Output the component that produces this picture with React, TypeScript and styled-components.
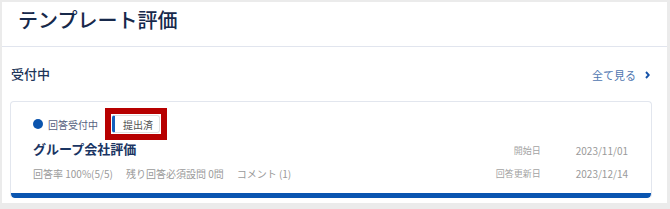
import { Fragment } from "react";
import styled, { createGlobalStyle } from "styled-components";

const GlobalStyle = createGlobalStyle`
  body {
    margin: 0;
    background: #ebebeb;
    font-family: "Noto Sans CJK JP", "Noto Sans", sans-serif;
  }
`;

const Panel = styled.div`
  margin: 2px 3px 0 2px;
  height: 201px;
  background: #ffffff;
  display: flex;
  flex-direction: column;
`;

const Header = styled.div`
  height: 44px;
  padding-left: 16px;
  display: flex;
  align-items: center;
  border-bottom: 1px solid #e1e5ee;
`;

const PageTitle = styled.h1`
  margin: 0 0 10px 0;
  font-size: 20px;
  font-weight: 500;
  color: #17294b;
`;

const Section = styled.div`
  padding: 0 15px 0 8px;
`;

const SectionHead = styled.div`
  height: 54px;
  display: flex;
  align-items: center;
  justify-content: space-between;
  padding-left: 1px;
`;

const SectionTitle = styled.span`
  font-size: 13px;
  font-weight: 500;
  color: #1d3559;
  margin-top: -2px;
`;

const MoreLink = styled.a`
  display: flex;
  align-items: center;
  gap: 9px;
  font-size: 11px;
  color: #4f76b0;
  text-decoration: none;
  margin-top: 1px;
  margin-right: 2px;
`;

const Card = styled.div`
  border: 1px solid #e2e6ee;
  border-bottom: none;
  border-radius: 4px;
  overflow: hidden;
  display: flex;
  flex-direction: column;
`;

const CardBody = styled.div`
  display: flex;
  justify-content: space-between;
  align-items: flex-end;
  padding: 12px 23px 11px 22px;
`;

const Left = styled.div`
  display: flex;
  flex-direction: column;
`;

const StatusRow = styled.div`
  height: 20px;
  display: flex;
  align-items: center;
`;

const Dot = styled.span`
  width: 10px;
  height: 10px;
  border-radius: 50%;
  background: #0b54ad;
  margin-right: 5px;
`;

const StatusText = styled.span`
  font-size: 10px;
  color: #55617e;
`;

const TagWrap = styled.span`
  position: relative;
  margin-left: 14px;
  display: flex;
`;

const Tag = styled.span`
  height: 18px;
  width: 48px;
  box-sizing: border-box;
  display: flex;
  align-items: center;
  justify-content: center;
  padding-left: 2px;
  border: 1px solid #e0e0e0;
  border-left: 3px solid #1560bd;
  border-radius: 3px;
  font-size: 10px;
  color: #555555;
`;

const Highlight = styled.span`
  position: absolute;
  inset: -7px;
  border: 6px solid #b70000;
  pointer-events: none;
`;

const CardTitle = styled.div`
  margin-top: 4px;
  height: 22px;
  line-height: 22px;
  font-size: 13px;
  font-weight: 700;
  color: #1a3563;
`;

const Stats = styled.div`
  margin-top: 6px;
  height: 16px;
  line-height: 16px;
  display: flex;
  gap: 13px;
  font-size: 10px;
  color: #9a9a9a;
`;

const Dates = styled.div`
  display: grid;
  grid-template-columns: auto auto;
  column-gap: 35px;
  row-gap: 7px;
`;

const DateLabel = styled.span`
  justify-self: end;
  height: 16px;
  line-height: 16px;
  font-size: 9px;
  color: #a3a3a3;
`;

const DateValue = styled.span`
  height: 16px;
  line-height: 16px;
  font-size: 10px;
  color: #9a9a9a;
`;

const BottomBar = styled.div`
  height: 5px;
  background: #0a55b0;
  border-radius: 0 0 4px 4px;
`;

const Chevron = () => (
  <svg width="5" height="8" viewBox="0 0 5 8">
    <path d="M1 1 L3.8 4 L1 7" fill="none" stroke="#1552a8" strokeWidth="1.9" />
  </svg>
);

const dates = [
  { label: "開始日", value: "2023/11/01" },
  { label: "回答更新日", value: "2023/12/14" },
];

export default function App() {
  return (
    <>
      <GlobalStyle />
      <Panel>
        <Header>
          <PageTitle>テンプレート評価</PageTitle>
        </Header>
        <Section>
          <SectionHead>
            <SectionTitle>受付中</SectionTitle>
            <MoreLink href="#">
              全て見る
              <Chevron />
            </MoreLink>
          </SectionHead>
          <Card>
            <CardBody>
              <Left>
                <StatusRow>
                  <Dot />
                  <StatusText>回答受付中</StatusText>
                  <TagWrap>
                    <Tag>提出済</Tag>
                    <Highlight />
                  </TagWrap>
                </StatusRow>
                <CardTitle>グループ会社評価</CardTitle>
                <Stats>
                  <span>回答率 100%(5/5)</span>
                  <span>残り回答必須設問 0問</span>
                  <span>コメント (1)</span>
                </Stats>
              </Left>
              <Dates>
                {dates.map((d) => (
                  <Fragment key={d.label}>
                    <DateLabel>{d.label}</DateLabel>
                    <DateValue>{d.value}</DateValue>
                  </Fragment>
                ))}
              </Dates>
            </CardBody>
            <BottomBar />
          </Card>
        </Section>
      </Panel>
    </>
  );
}
